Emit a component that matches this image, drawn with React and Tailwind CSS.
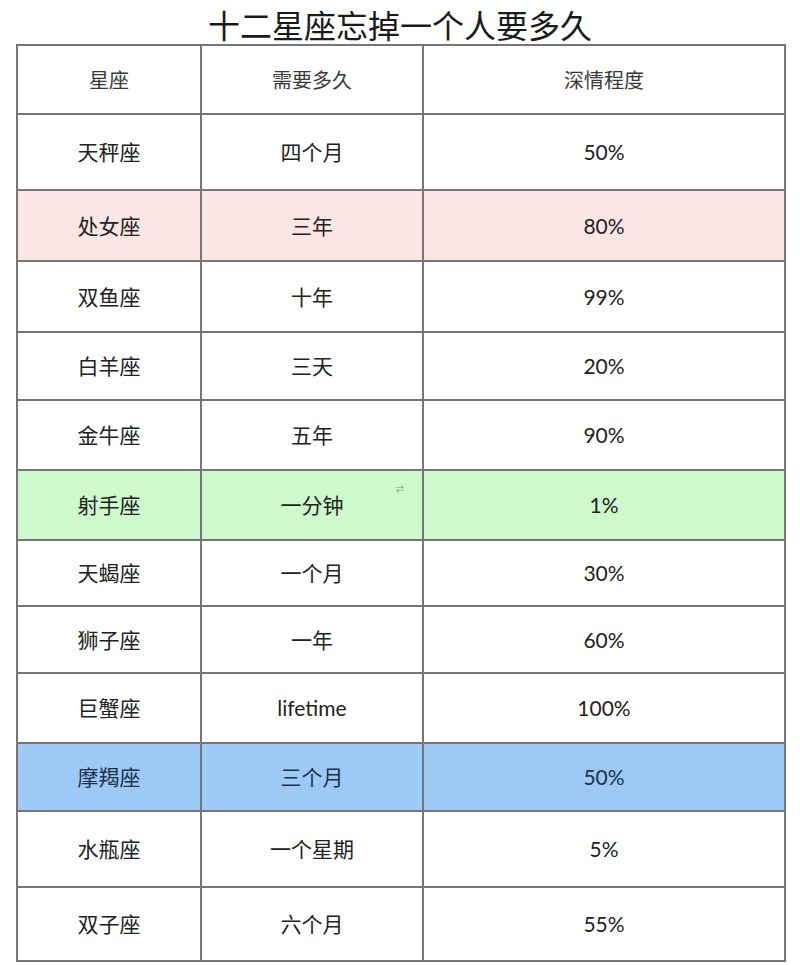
const rows = [
  { sign: "天秤座", time: "四个月", pct: "50%", h: "h-[76px]", bg: "" },
  { sign: "处女座", time: "三年", pct: "80%", h: "h-[71px]", bg: "bg-[#fbe5e5]" },
  { sign: "双鱼座", time: "十年", pct: "99%", h: "h-[71px]", bg: "" },
  { sign: "白羊座", time: "三天", pct: "20%", h: "h-[68px]", bg: "" },
  { sign: "金牛座", time: "五年", pct: "90%", h: "h-[70px]", bg: "" },
  { sign: "射手座", time: "一分钟", pct: "1%", h: "h-[70px]", bg: "bg-[#cdf9cd]" },
  { sign: "天蝎座", time: "一个月", pct: "30%", h: "h-[66px]", bg: "" },
  { sign: "狮子座", time: "一年", pct: "60%", h: "h-[67px]", bg: "" },
  { sign: "巨蟹座", time: "lifetime", pct: "100%", h: "h-[70px]", bg: "" },
  { sign: "摩羯座", time: "三个月", pct: "50%", h: "h-[68px]", bg: "bg-[#9cc9f5] text-[#1d3147]" },
  { sign: "水瓶座", time: "一个星期", pct: "5%", h: "h-[76px]", bg: "" },
  { sign: "双子座", time: "六个月", pct: "55%", h: "h-[74px]", bg: "" },
];

export default function App() {
  return (
    <div className="w-[800px] h-[965px] bg-white font-['Lato','Noto_Sans_CJK_SC',sans-serif] text-[#222]">
      {/* TITLE */}
      <h1 className="h-[44px] pt-[6px] text-center text-[32px] leading-[36px] font-normal text-[#1a1a1a] font-['Noto_Sans_CJK_SC',sans-serif]">
        十二星座忘掉一个人要多久
      </h1>

      {/* TABLE */}
      <div className="ml-[16px] w-[770px]">
        <table className="w-full border-collapse table-fixed">
          <colgroup>
            <col className="w-[184px]" />
            <col className="w-[222px]" />
            <col />
          </colgroup>
          <thead>
            <tr className="h-[69px] text-[20px] text-[#3a3a3a]">
              <th className="border-2 border-[#767676] font-normal">星座</th>
              <th className="border-2 border-[#767676] font-normal">需要多久</th>
              <th className="border-2 border-[#767676] font-normal">深情程度</th>
            </tr>
          </thead>
          <tbody className="text-[21px]">
            {rows.map((r) => (
              <tr key={r.sign} className={`${r.h} ${r.bg}`}>
                <td className="border-2 border-[#767676] text-center">{r.sign}</td>
                <td className="border-2 border-[#767676] text-center relative">
                  {r.time}
                  {r.sign === "射手座" && (
                    <span className="absolute right-[18px] top-[12px] text-[8px] text-[#888]">⇄</span>
                  )}
                </td>
                <td className="border-2 border-[#767676] text-center">{r.pct}</td>
              </tr>
            ))}
          </tbody>
        </table>
      </div>
    </div>
  );
}
